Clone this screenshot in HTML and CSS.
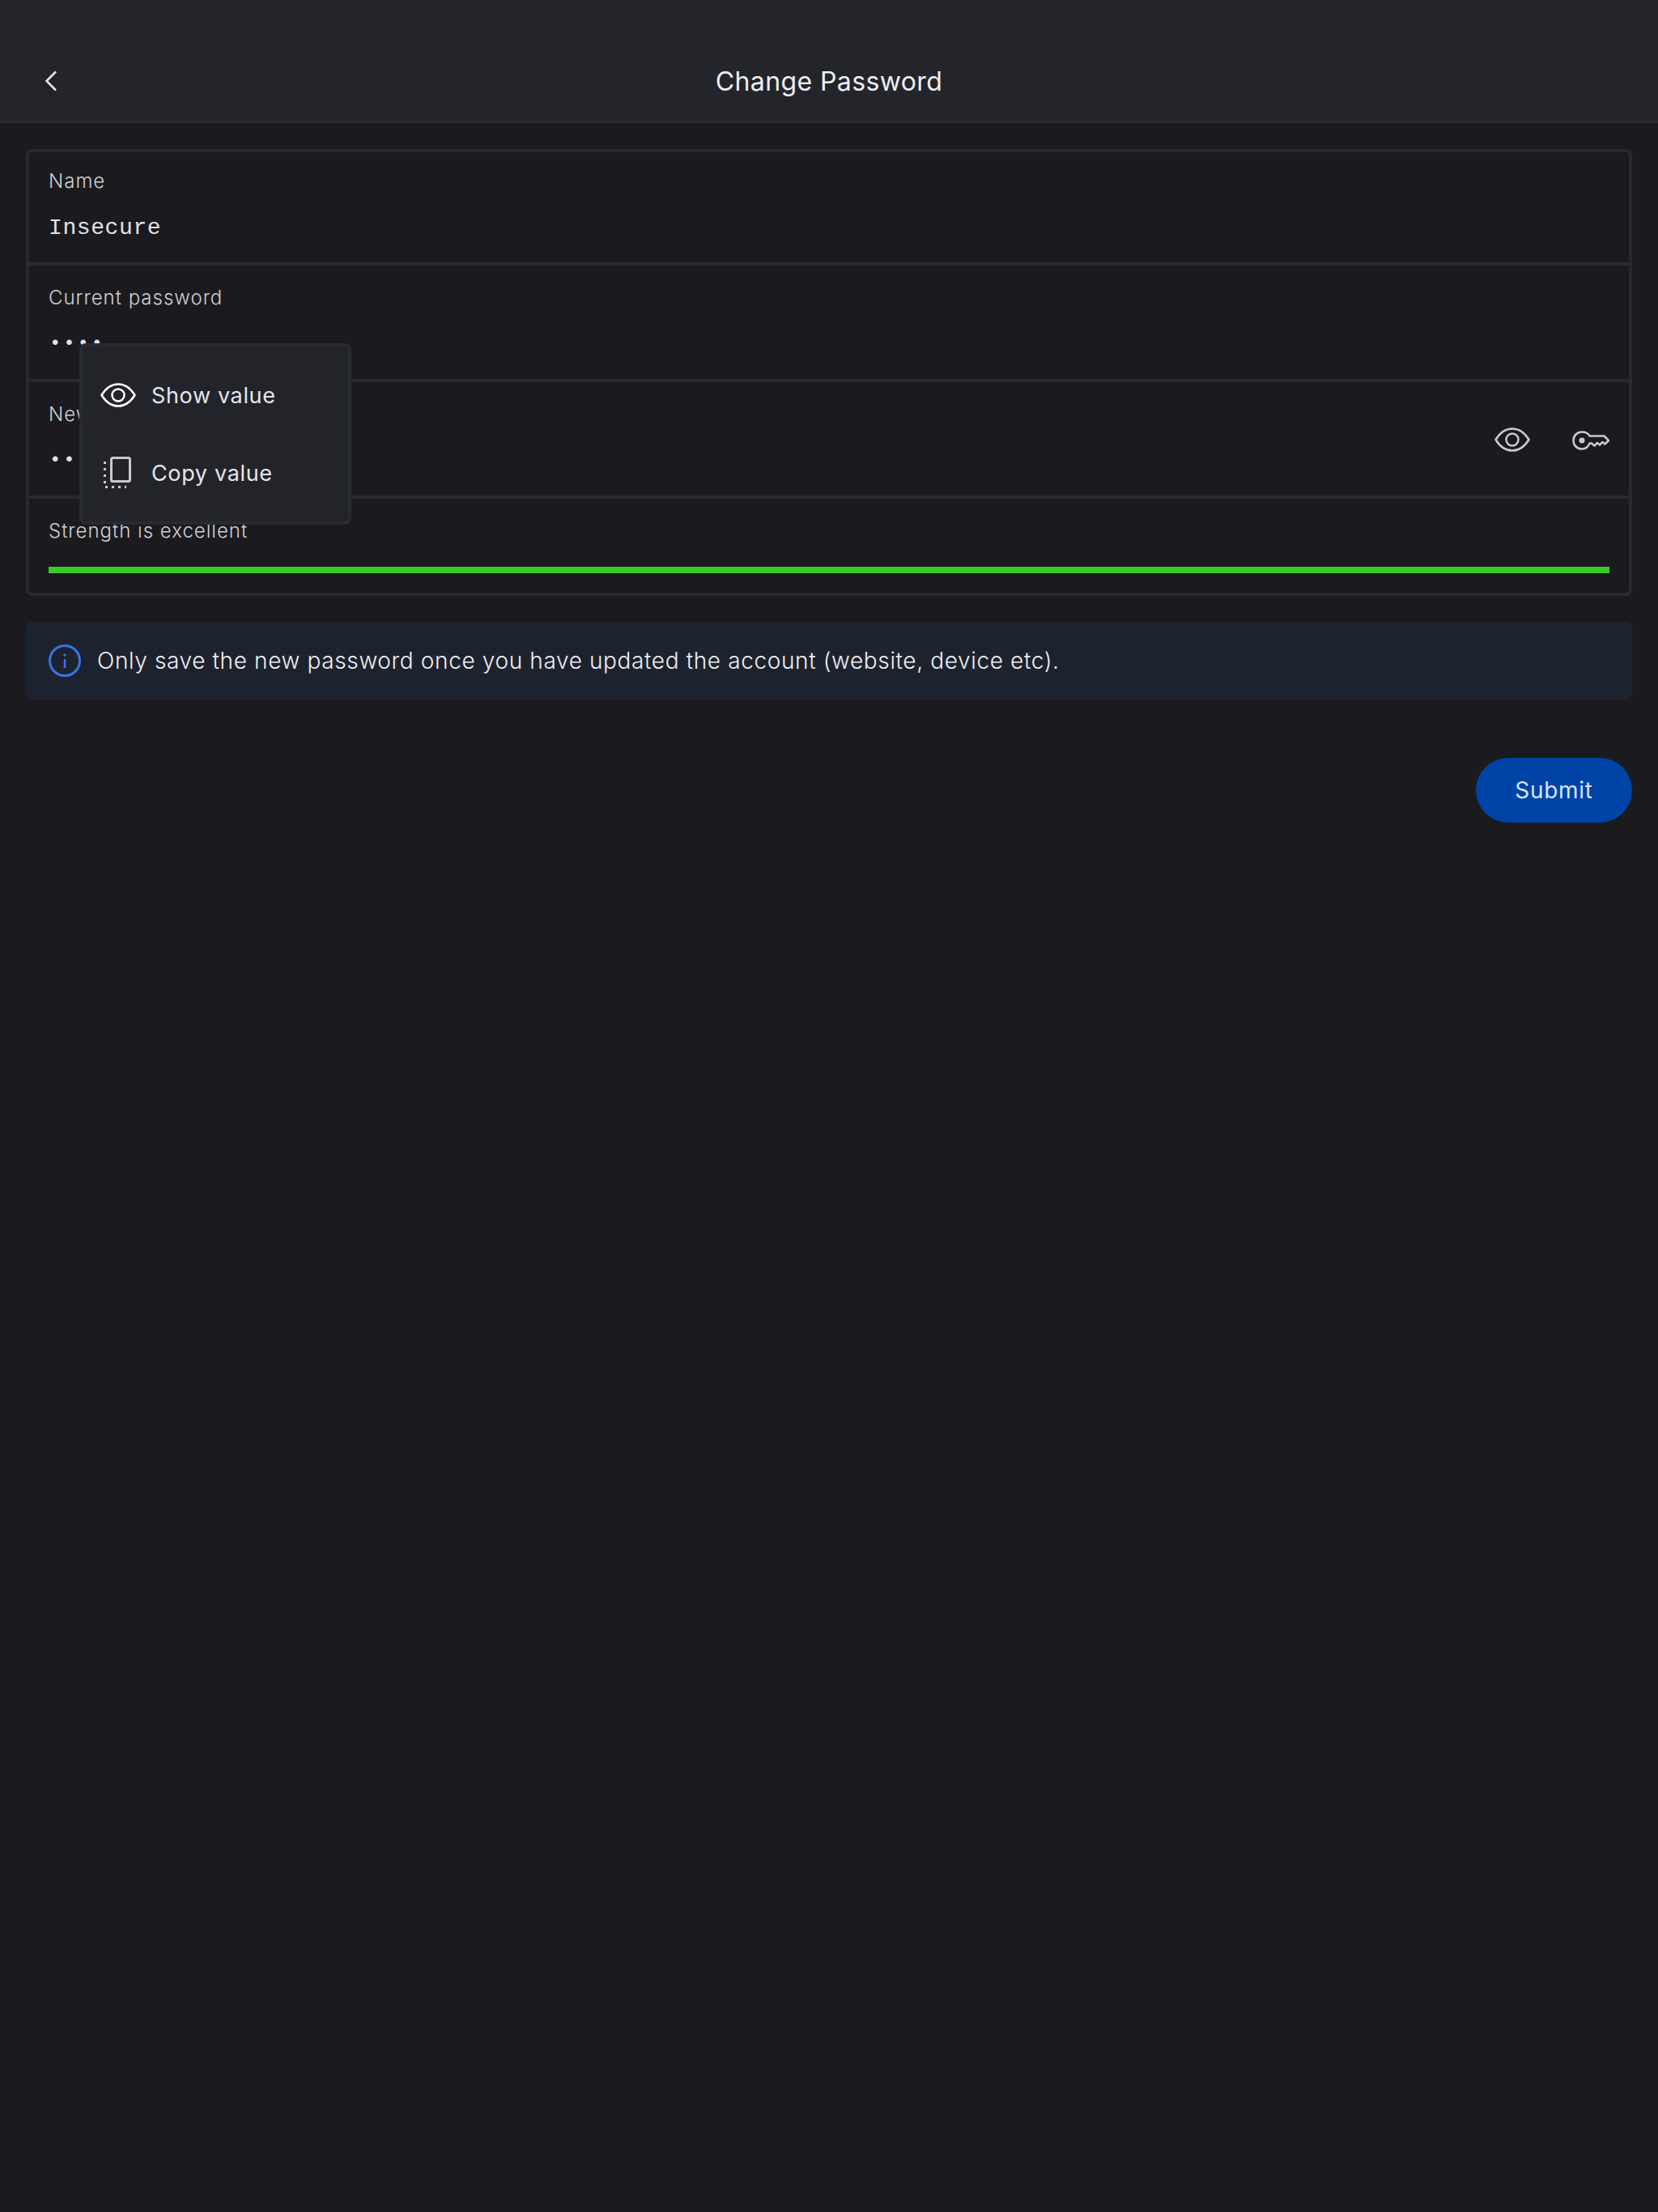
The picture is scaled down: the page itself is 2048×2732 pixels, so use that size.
FILE: index.html
```html
<!DOCTYPE html>
<html lang="en">
<head>
    <meta charset="UTF-8">
    <meta name="viewport" content="width=device-width, initial-scale=1.0">
    <title>Change Password</title>
    <link rel="stylesheet" href="styles.css">
</head>
<body>
    <header class="topbar">
        <button class="back" type="button" aria-label="Back">
            <svg width="16" height="26" viewBox="0 0 16 26"><path d="M14 1.5 2.5 13 14 24.500" fill="none" stroke="#e6e6ea" stroke-width="2.500"/></svg>
        </button>
        <h1 class="title">Change Password</h1>
    </header>

    <main class="content">
        <form class="card">
            <div class="row row-first">
                <div class="label">Name</div>
                <div class="value">Insecure</div>
            </div>
            <div class="row">
                <div class="label">Current password</div>
                <div class="value dots">••••</div>
            </div>
            <div class="row row-actions">
                <div class="field">
                    <div class="label">New password</div>
                    <div class="value dots">••••</div>
                </div>
                <svg class="icon-eye" width="44" height="30" viewBox="0 0 44 30">
                    <path d="M1.500 15C7 6 14 1.500 22 1.500S37 6 42.500 15C37 24 30 28.500 22 28.500S7 24 1.500 15Z" fill="none" stroke="#c9c9d0" stroke-width="2.500"/>
                    <circle cx="22" cy="15" r="7.500" fill="none" stroke="#c9c9d0" stroke-width="2.500"/>
                </svg>
                <svg class="icon-key" width="46" height="24" viewBox="0 0 46 24">
                    <path d="M21.500 6.500H39.500L45 12 40.500 16.500 37.500 14 34 17.500 31 15 27.500 18.500 24 15.500H21.500C20 19.500 16.500 22.500 12 22.500 6 22.500 1.500 18 1.500 12S6 1.500 12 1.500C16.500 1.500 20 3.500 21.500 6.500Z" fill="none" stroke="#c9c9d0" stroke-width="2.500" stroke-linejoin="round"/>
                    <circle cx="12" cy="12" r="3.500" fill="#c9c9d0"/>
                </svg>
            </div>
            <div class="row row-strength">
                <div class="label">Strength is excellent</div>
                <div class="bar"></div>
            </div>

            <div class="menu">
                <div class="menu-item">
                    <svg class="menu-icon" width="44" height="30" viewBox="0 0 44 30">
                        <path d="M1.500 15C7 6 14 1.500 22 1.500S37 6 42.500 15C37 24 30 28.500 22 28.500S7 24 1.500 15Z" fill="none" stroke="#fff" stroke-width="2.500"/>
                        <circle cx="22" cy="15" r="7.500" fill="none" stroke="#fff" stroke-width="2.500"/>
                    </svg>
                    <span>Show value</span>
                </div>
                <div class="menu-item">
                    <svg class="menu-icon" width="44" height="40" viewBox="0 0 44 40">
                        <rect x="13.500" y="1.500" width="23" height="29" rx="2" fill="none" stroke="#c9c9d0" stroke-width="3"/>
                        <path d="M5.500 6v31.500H32" fill="none" stroke="#c9c9d0" stroke-width="3" stroke-dasharray="3 5"/>
                    </svg>
                    <span>Copy value</span>
                </div>
            </div>
        </form>

        <div class="notice">
            <svg width="40" height="40" viewBox="0 0 40 40">
                <circle cx="20" cy="20" r="18.500" fill="none" stroke="#3a72e6" stroke-width="3"/>
                <circle cx="20" cy="13" r="1.700" fill="#3a72e6"/>
                <path d="M20 18v11" stroke="#3a72e6" stroke-width="2.500"/>
            </svg>
            <span>Only save the new password once you have updated the account (website, device etc).</span>
        </div>

        <div class="actions">
            <button class="submit" type="button">Submit</button>
        </div>
    </main>
</body>
</html>
```

FILE: styles.css
```css
* {
    box-sizing: border-box;
}
body {
    margin: 0;
    min-height: 100vh;
    background-color: #1b1b1f;
    color: #e6e6ea;
    font-family: Inter, "Liberation Sans", sans-serif;
    font-weight: 300;
}
.topbar {
    position: relative;
    display: flex;
    justify-content: center;
    align-items: center;
    height: 152px;
    padding-top: 52px;
    background: #24252a;
    border-bottom: 4px solid #282a31;
}
.back {
    position: absolute;
    left: 55px;
    top: 87px;
    display: flex;
    padding: 0;
    border: none;
    background: none;
}
.title {
    margin: 0;
    font-size: 32px;
    font-weight: 400;
    letter-spacing: 0.400px;
    color: #eeeef1;
}
.content {
    padding: 32px;
}
.card {
    position: relative;
    border: 4px solid #282a31;
    border-radius: 8px;
}
.row {
    height: 144px;
    padding: 24px 24px 0;
    border-top: 4px solid #282a31;
}
.row-first {
    height: 136px;
    padding-top: 20px;
    border-top: none;
}
.row-actions {
    display: flex;
    align-items: center;
    padding-top: 0;
}
.field {
    flex: 1;
    align-self: stretch;
    padding-top: 24px;
}
.icon-eye {
    margin: 2px 52px 0 0;
}
.icon-key {
    margin-top: 4px;
}
.row-strength {
    height: 120px;
}
.label {
    height: 32px;
    font-size: 24px;
    line-height: 32px;
    letter-spacing: 1px;
    color: #cfcfd4;
}
.value {
    margin-top: 25px;
    height: 34px;
    font-family: "Liberation Mono", "DejaVu Sans Mono", monospace;
    font-size: 28px;
    line-height: 34px;
    letter-spacing: 0.600px;
    color: #e2e2e6;
}
.dots {
    margin-top: 24px;
    padding-left: 1px;
    font-size: 24px;
    letter-spacing: 2.800px;
}
.bar {
    height: 8px;
    margin-top: 28px;
    background: #38cb26;
}
.menu {
    position: absolute;
    left: 62px;
    top: 236px;
    width: 336px;
    height: 224px;
    padding: 12px 0 0 22px;
    background: #23242a;
    border: 4px solid #282a31;
    border-radius: 8px;
    font-size: 27px;
    font-weight: 400;
    letter-spacing: 0.650px;
    color: #e6e6ea;
}
.menu-item {
    display: flex;
    align-items: center;
    height: 96px;
}
.menu-icon {
    margin-right: 19px;
    flex: none;
}
.notice {
    display: flex;
    align-items: center;
    gap: 20px;
    height: 96px;
    margin-top: 32px;
    padding-left: 28px;
    background: #1d232e;
    border-radius: 8px;
    font-size: 28px;
    letter-spacing: 0.630px;
    color: #eeeef1;
}
.actions {
    display: flex;
    justify-content: flex-end;
    margin-top: 72px;
}
.submit {
    width: 193px;
    height: 80px;
    padding: 0;
    border: none;
    border-radius: 40px;
    background: #0043a6;
    color: #d8e2ff;
    font-family: Inter, "Liberation Sans", sans-serif;
    font-size: 28px;
    font-weight: 400;
    letter-spacing: 0.700px;
}
```
